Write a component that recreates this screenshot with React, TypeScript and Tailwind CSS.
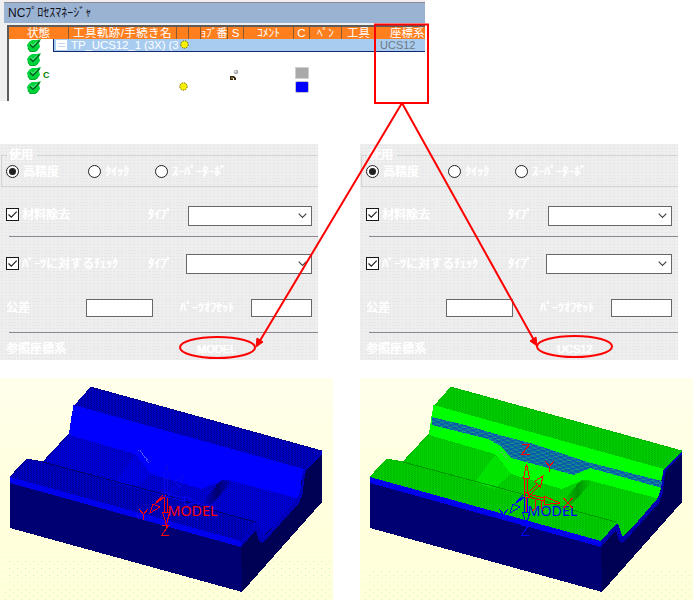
import React from "react";

const jp = "font-['Liberation_Sans','Noto_Sans_CJK_JP',sans-serif]";
const dither =
  "bg-[#ededed] bg-[radial-gradient(#e4e4ea_0.5px,transparent_0.9px),radial-gradient(#f3f3f0_0.5px,transparent_0.9px)] bg-[length:4px_3px,3px_4px]";

function Check() {
  return (
    <svg width="14" height="14" viewBox="0 0 14 14" className="block">
      <path d="M0 6 L2 3 L5 1 L10 1 L14 0 L12 4 L13 8 L10 12 L7 13 L3 13 L1 10 Z" fill="#00d43c" />
      <path d="M1 9 L3 12.500 L8 12.500 L11 10" fill="none" stroke="#00a828" strokeWidth="1" />
      <path d="M3 5.500 L6 8.500 L12.500 1.500" fill="none" stroke="#006420" strokeWidth="1.5" />
      <path d="M4 4.500 L6 6.500 L10 2.500" fill="none" stroke="#a0f8b0" strokeWidth="0.8" />
    </svg>
  );
}

function Sun() {
  return (
    <svg width="9" height="9" viewBox="0 0 9 9" className="block">
      <circle cx="4.500" cy="4.500" r="3.700" fill="#f8f000" stroke="#605808" strokeWidth="0.9" strokeDasharray="1.500 1" />
    </svg>
  );
}

function Head({ w, children }: { w: string; children?: React.ReactNode }) {
  return (
    <div className={`${w} h-full shrink-0 border-r border-[#8a5a30] flex justify-center items-center whitespace-nowrap`}>
      {children}
    </div>
  );
}

function Manager() {
  return (
    <section className={`w-[425px] h-[101px] bg-[#efefef] pt-[2px] pl-1 overflow-hidden ${jp}`}>
      <div className="h-[21px] border-t border-[#8c8c94] bg-[#9bb3d3] pl-1 text-[12px] leading-[20px] text-[#101018] whitespace-nowrap">
        NCﾌﾟﾛｾｽﾏﾈｰｼﾞｬ
      </div>
      <div className="mt-[2px] ml-[3px] h-[76px] border-t-2 border-l-2 border-[#5c5c5c] bg-white">
        <div className="flex h-[12px] bg-[#ff7f1f] text-white text-[11.5px] leading-[12px]">
          <Head w="w-[60px]">状態</Head>
          <Head w="w-[108px]"><span className="tracking-[0.4px]">工具軌跡/手続き名</span></Head>
          <Head w="w-[12px]" />
          <Head w="w-[12px]" />
          <Head w="w-[27px]"><span className="text-[11px] tracking-[-0.4px]">ｮﾌﾞ番</span></Head>
          <Head w="w-[16px]">S</Head>
          <Head w="w-[50px]">ｺﾒﾝﾄ</Head>
          <Head w="w-[16px]">C</Head>
          <Head w="w-[32px]">ﾍﾟﾝ</Head>
          <Head w="w-[34px]">工具</Head>
          <div className="pl-[14px] whitespace-nowrap">座標系</div>
        </div>
        <div className="flex h-[13px]">
          <div className="w-[44px] pl-[18px]"><Check /></div>
          <div className="flex-1 h-[13px] flex items-start border-b border-l border-[#102870] bg-[#a8ccf0] text-[11.5px] leading-[12px] whitespace-nowrap">
            <div className="mt-px ml-[2px] w-[11px] h-[10px] shrink-0 bg-white flex flex-col justify-evenly px-[2px]">
              <i className="h-px bg-[#c8d8ec]" /><i className="h-px bg-[#c8d8ec]" />
            </div>
            <span className="ml-[4px] w-[109px] shrink-0 text-white tracking-[-0.1px]">TP_UCS12_1 (3X) (3</span>
            <span className="mt-px w-[200px] shrink-0"><Sun /></span>
            <span className="text-[#707880] text-[11px]">UCS12</span>
          </div>
        </div>
        <div className="h-[14px] pl-[18px] pt-[1px]"><Check /></div>
        <div className="flex h-[14px]">
          <div className="w-[33px] pl-[18px] pt-[1px]"><Check /></div>
          <span className="w-[188px] pt-[4px] pl-[1px] text-[9px] leading-[10px] font-bold text-[#008000]">C</span>
          <svg width="12" height="14" viewBox="0 0 12 14" className="block">
            <circle cx="6" cy="6" r="2.300" fill="#a8a8b0" /><circle cx="5.400" cy="5.400" r="1" fill="#e8e8e8" />
            <path d="M0 10H4L6 12V14H4V12H3V14H0Z" fill="#382810" /><path d="M1 12H3" stroke="#d0a850" />
          </svg>
          <div className="ml-[53px] mt-[1px] w-[14px] h-[12px] border border-[#d0d0d0] bg-[#a9a9a9]" />
        </div>
        <div className="flex h-[14px]">
          <div className="w-[170px] pl-[18px] pt-[1px]"><Check /></div>
          <span className="w-[116px] pt-[2px]"><Sun /></span>
          <div className="mt-[1px] w-[14px] h-[12px] rounded-[2px] border border-[#c0c0d0] bg-[#0000ff]" />
        </div>
      </div>
    </section>
  );
}

function Radio({ on }: { on?: boolean }) {
  return (
    <span className="w-[13px] h-[13px] shrink-0 rounded-full border border-[#202020] bg-white flex items-center justify-center">
      {on && <i className="w-[7px] h-[7px] rounded-full bg-[#202020]" />}
    </span>
  );
}

function Box() {
  return (
    <span className="w-[13px] h-[13px] shrink-0 border border-[#181818] bg-white">
      <svg width="11" height="11" viewBox="0 0 11 11" className="block">
        <path d="M1.500 5.500 L4.300 8.200 L9.700 2.600" fill="none" stroke="#202020" strokeWidth="1.200" />
      </svg>
    </span>
  );
}

function Select({ w }: { w: string }) {
  return (
    <span className={`${w} h-[20px] shrink-0 border border-[#686868] bg-white flex items-center justify-end pr-[4px]`}>
      <svg width="9" height="6" viewBox="0 0 9 6"><path d="M0.700 0.700 L4.500 4.500 L8.300 0.700" fill="none" stroke="#404040" strokeWidth="1.100" /></svg>
    </span>
  );
}

function Settings({ system }: { system: string }) {
  return (
    <section className={`w-[318px] h-[216px] overflow-hidden ${dither} ${jp} text-white text-[12px] leading-[14px] [text-shadow:0_0_1px_#fff,0.4px_0_0_#fff] whitespace-nowrap`}>
      <div className="h-[43px] pt-[4px]">
        <div className="flex h-[14px] items-center pl-px">
          <i className="w-[6px] h-px bg-[#d3d5cf]" />
          <span className="w-[30px] pl-[2px]">使用</span>
          <i className="flex-1 h-px bg-[#d3d5cf]" />
        </div>
        <div className="ml-px -mt-[7px] h-[32px] border-l border-b border-[#d3d5cf] flex items-center pt-[2px] pl-[4px]">
          <Radio on /><span className="w-[69px] pl-[4px]">高精度</span>
          <Radio /><span className="w-[54px] pl-[4px]">ｸｲｯｸ</span>
          <Radio /><span className="pl-[4px]">ｽｰﾊﾟｰﾀｰﾎﾞ</span>
        </div>
      </div>
      <div className="h-[49px] flex pl-[6px] pt-[19px]">
        <div className="flex h-[20px] pt-[2px]"><Box /><span className="w-[129px] pl-[3px]">材料除去</span><span className="w-[40px]">ﾀｲﾌﾟ</span></div>
        <Select w="w-[124px]" />
      </div>
      <div className="h-px ml-[9px] bg-[#8f868f]" />
      <div className="h-[45px] flex pl-[6px] pt-[17px]">
        <div className="flex h-[20px] pt-[3px]"><Box /><span className="w-[129px] pl-[3px]">ﾊﾟｰﾂに対するﾁｪｯｸ</span><span className="w-[38px]">ﾀｲﾌﾟ</span></div>
        <Select w="w-[126px]" />
      </div>
      <div className="h-[50px] flex pl-[6px] pt-[17px]">
        <span className="w-[80px] pt-[2px]">公差</span>
        <span className="w-[67px] h-[18px] border border-[#686868] bg-white" />
        <span className="w-[98px] pl-[27px] pt-[2px]">ﾊﾟｰﾂｵﾌｾｯﾄ</span>
        <span className="w-[61px] h-[18px] border border-[#686868] bg-white" />
      </div>
      <div className="h-px ml-[9px] bg-[#8f868f]" />
      <div className="flex pl-[6px] pt-[9px]"><span className="w-[191px]">参照座標系</span><span className="text-[11px]">{system}</span></div>
    </section>
  );
}

type Tone = { a: string; b: string; bright: string; floor: string; floorB: string; edge: string };
const blueTone: Tone = { a: "#0000c4", b: "#000090", bright: "#0000ff", floor: "#0000d6", floorB: "#0000a4", edge: "#000070" };
const greenTone: Tone = { a: "#00cd00", b: "#00b800", bright: "#00ff00", floor: "#00d200", floorB: "#00bc00", edge: "#009600" };

function Model({ green }: { green?: boolean }) {
  const t = green ? greenTone : blueTone;
  const id = green ? "g" : "b";
  const main = green ? "#0000ff" : "#ff0000";
  return (
    <svg width="333" height="222" viewBox="0 378 333 222" className="block bg-[#ffffe1]">
      <defs>
        <linearGradient id={`${id}sky`} x1="0" y1="0" x2="0" y2="1"><stop offset="0" stopColor="#ffffec" /><stop offset="0.5" stopColor="#ffffde" /><stop offset="1" stopColor="#ffffda" /></linearGradient>
        <pattern id={`${id}dots`} width="8" height="7" patternUnits="userSpaceOnUse"><rect x="1" y="1" width="1" height="1" fill="#c8f5b0" /><rect x="5" y="4" width="1" height="1" fill="#d4f5bc" /></pattern>
        <pattern id={`${id}top`} width="3" height="2" patternUnits="userSpaceOnUse"><rect width="3" height="2" fill={t.a} /><path d="M0 0h1v1h-1zM1 1h1v1h-1z" fill={t.b} /></pattern>
        <pattern id={`${id}floor`} width="4" height="2" patternUnits="userSpaceOnUse"><rect width="4" height="2" fill={t.floor} /><path d="M0 0h1v1h-1zM2 1h1v1h-1z" fill={t.floorB} /></pattern>
        <pattern id={`${id}hatch`} width="9" height="4" patternUnits="userSpaceOnUse" patternTransform="rotate(7)"><rect width="9" height="4" fill="#0a58ac" /><path d="M0 3.300H5M5 1.300H9" stroke="#16b870" strokeWidth="0.900" /></pattern>
        <linearGradient id={`${id}shade`} x1="0" y1="0" x2="1" y2="0"><stop offset="0" stopColor={t.edge} stopOpacity="0" /><stop offset="0.5" stopColor={t.edge} /><stop offset="1" stopColor={t.edge} stopOpacity="0" /></linearGradient>
      </defs>
      <rect y="378" width="333" height="222" fill={`url(#${id}sky)`} />
      <rect x="2" y={green ? 569 : 556} width="330" height="44" fill={`url(#${id}dots)`} />
      <g shapeRendering="crispEdges">
        <path d="M10 478L241 541L242 592L10 528Z" fill="#000072" />
        <path d="M241 541L256 524L262 532L297 492L302 472L322 451V502L242 592Z" fill="#000055" />
        <path d="M90.500 387L322 451L304 470L301 482L300 498L262 538L256 524L241 541L10 477L27 459L43 462L69 434L71 419L73.500 406Z" fill={`url(#${id}floor)`} />
        <path d="M90.500 387L322 451L304 470L73.500 406Z" fill={`url(#${id}top)`} />
        <path d="M10 477L27 459L43 462L256 522L241 541Z" fill={`url(#${id}top)`} />
        <path d="M73.500 405L304 469L301 480L300 499L228 480L218 482L202 489L168 479L151 474L135 454L69 435L71 419Z" fill={t.bright} />
        <path d="M135 455L151 474L134 489L115 482Z" fill={t.bright} opacity={green ? 0.45 : 0.35} />
        <path d="M202 503L221 480L233 481L211 505Z" fill={`url(#${id}shade)`} />
        <path d="M43 462L166 495L212 510L256 522" stroke={t.edge} strokeWidth="1" fill="none" />
        <path d="M69 434L43 462L27 459L10 477M90.500 387L322 451" stroke={t.b} strokeWidth="1" fill="none" />
        {green && <path d="M71.500 417L105 425L143 436L170 443L227 462L302 481V488L230 468L214 475L170 463L151 458L141 446L128 439L71.500 425Z" fill={`url(#${id}hatch)`} />}
        {!green && <path d="M138 450l4 3l3 5l4 5M140 450l3 5l5 5" stroke="#4058ff" strokeWidth="1" strokeDasharray="2 1" fill="none" />}
        {green && <path d="M138 450l5 4l6 8M140 449l8 9" stroke="#40d050" strokeWidth="1" strokeDasharray="2 1" fill="none" />}
        <path d="M10 477L241 541V547L10 483Z" fill="#0000ee" />
        <path d="M241 541L257 523L259 526L262 536L266 535L297 499L301 490L303 471L322 451V454L306 471L304 480L303 493L299 503L263 543L259 541L256 530L241 547Z" fill={green ? "#0000b0" : "#0000ba"} />
      </g>
      <g fill="none" stroke={main} strokeWidth="1" shapeRendering="crispEdges">
        <path d="M166 495L157 503M163 495L154 505M150 513L153 504L160 507L150 513Z" />
        <path d="M164.500 497V512M167.500 497V512M162.500 512H169.500L166.500 525Z" />
        <path d="M139.500 509.500L143.500 514.500L147.500 509.500M143.500 514.500V519.500M161.500 525.500H168.500L161.500 535.500H168.500" />
      </g>
      <text x="167.500" y="516" textLength="50" lengthAdjust="spacingAndGlyphs" fontFamily="Noto Sans, sans-serif" fontSize="14.500" fill={main}>MODEL</text>
      <g fill="none" stroke={green ? "#ff0000" : "#0808e8"} strokeWidth="1" shapeRendering="crispEdges">
        <path d="M164.500 494V478M167.500 494V478M163.500 478.500H169.500L166.500 464Z" />
        <path d="M168 493L177 484M169 496L180 485M174.500 481.500L180.500 487.500L183 476Z" />
        <path d="M168 494L184 498M168 497L184 501M184.500 496.500V504.500L200 503Z" />
        <circle cx="166.500" cy="495" r="2.500" />
      </g>
      {green && (
        <g fill="none" stroke="#ff0000" strokeWidth="1" shapeRendering="crispEdges">
          <path d="M161.500 444.500H169.500L161.500 454.500H169.500M185.500 461.500L189.500 466.500L193.500 461.500M189.500 466.500V472M203.500 498L212.500 508M212.500 498L203.500 508" />
          <path d="M166.500 498V512M175 500V509L172 511M184 500L181 503V508L184 511" />
        </g>
      )}
    </svg>
  );
}

export default function App() {
  return (
    <main className="relative w-[693px] h-[600px] bg-white overflow-hidden flex flex-col">
      <Manager />
      <div className="mt-[43px] flex gap-[42px]">
        <Settings system="MODEL" />
        <Settings system="UCS12" />
      </div>
      <div className="mt-[18px] flex gap-[27px]">
        <Model />
        <Model green />
      </div>
      <svg className="absolute inset-0 pointer-events-none" width="693" height="600" viewBox="0 0 693 600" fill="none" stroke="#ff0000" strokeWidth="2">
        <rect x="375" y="24.500" width="53" height="78.500" />
        <path d="M402 103L258 344M402 103L535 342" />
        <path d="M256 347L257 338L263 342Z M537 346L530 341L536 337Z" fill="#ff0000" strokeWidth="1" />
        <ellipse cx="217.500" cy="347.500" rx="37.500" ry="10.500" />
        <ellipse cx="574.500" cy="346.500" rx="37.500" ry="10.500" />
      </svg>
    </main>
  );
}
